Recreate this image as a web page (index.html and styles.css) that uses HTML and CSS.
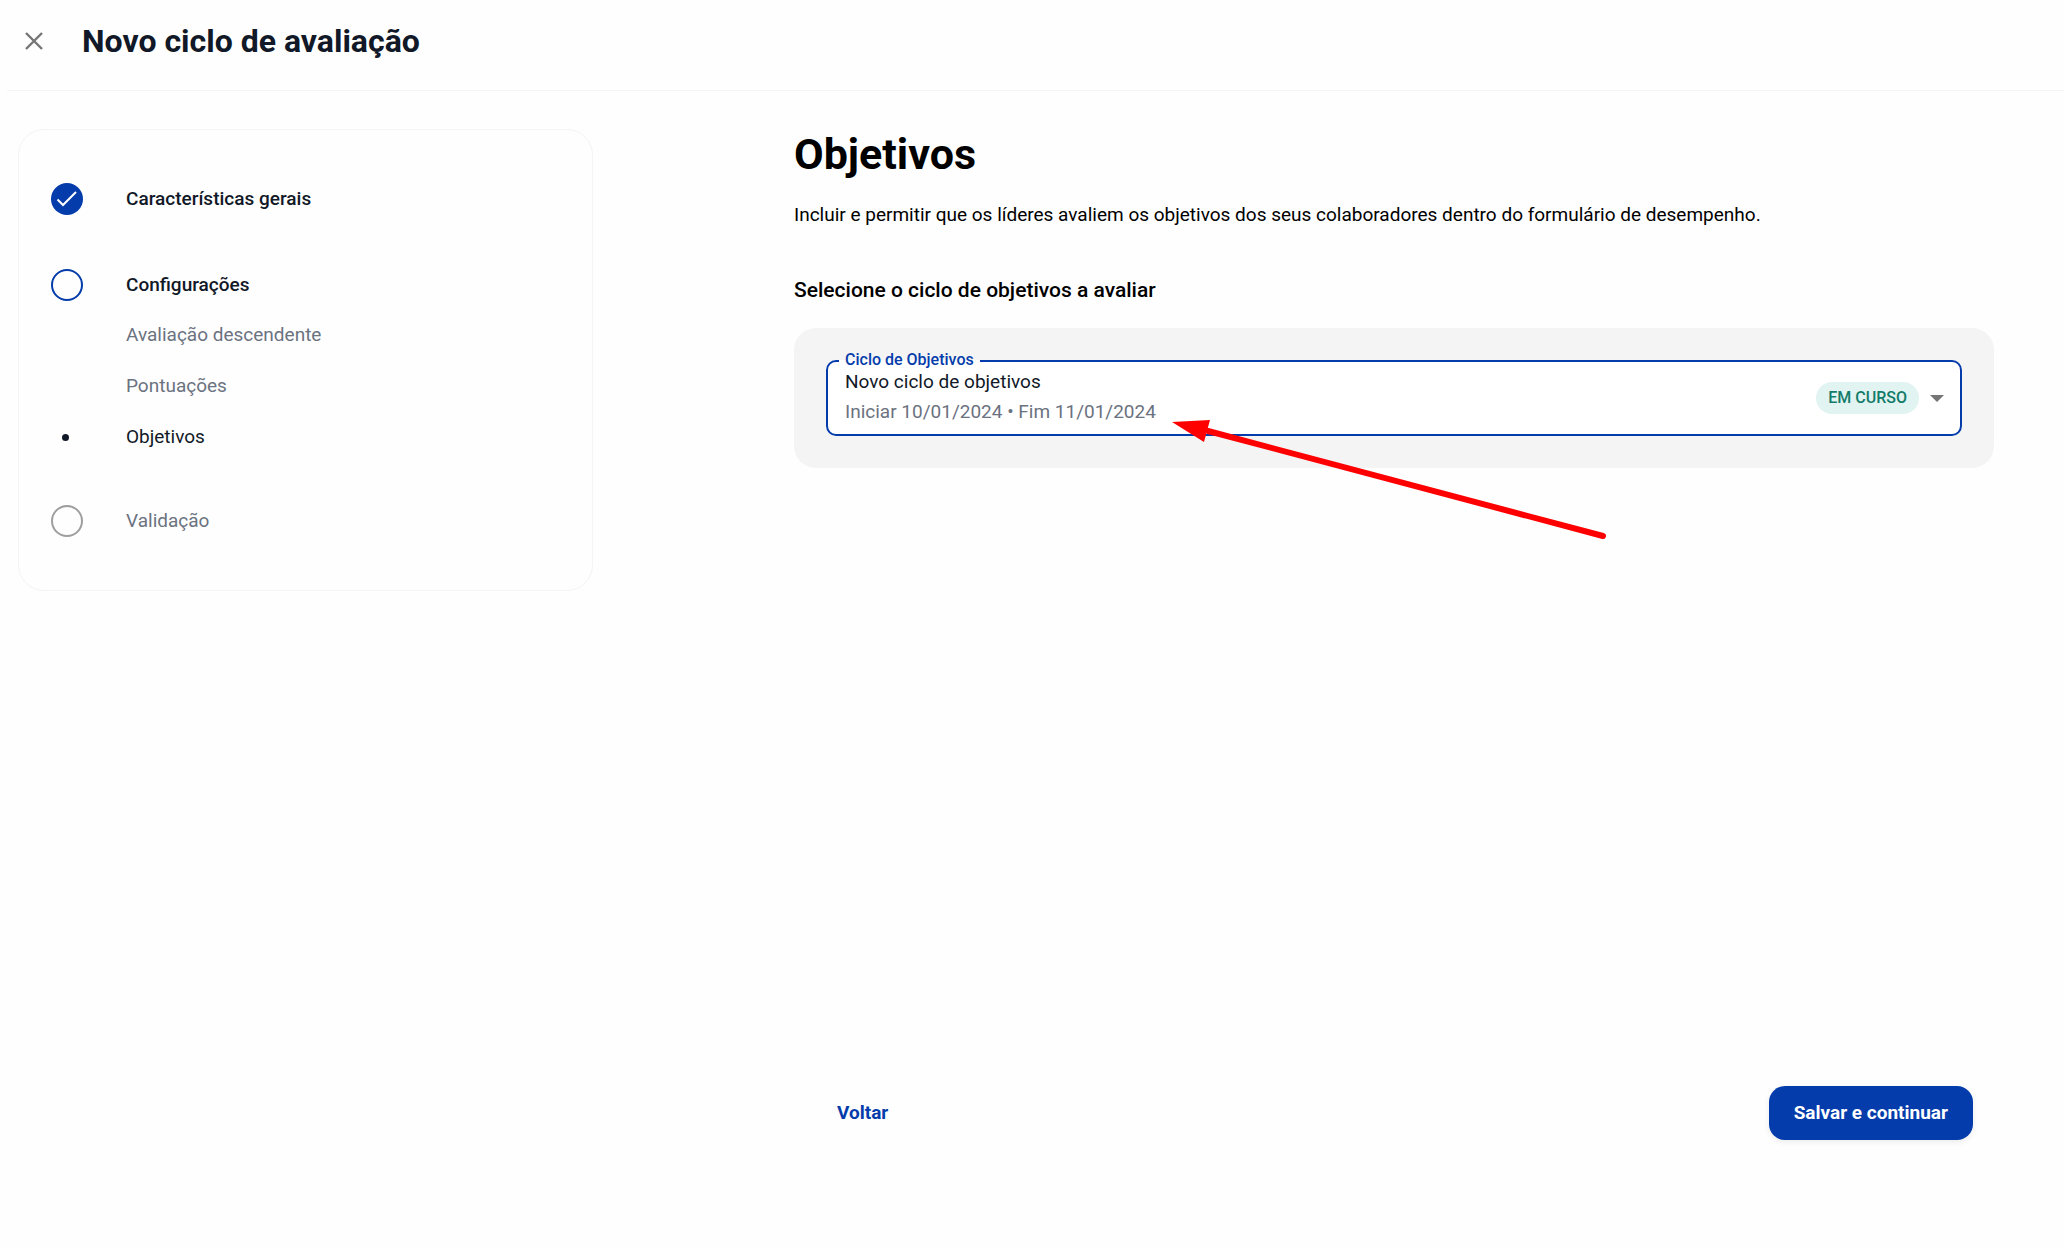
FILE: index.html
```html
<!DOCTYPE html>
<html lang="pt-BR">
<head>
    <meta charset="UTF-8">
    <meta name="viewport" content="width=device-width, initial-scale=1.0">
    <title>Novo ciclo de avaliação</title>
    <link rel="stylesheet" href="styles.css">
</head>
<body>
    <header class="topbar">
        <button type="button" class="close-btn" aria-label="Fechar">
            <svg width="18" height="18" viewBox="0 0 18 18" fill="none" stroke="#757575" stroke-width="2.4">
                <path d="M1 1L17 17M17 1L1 17"/>
            </svg>
        </button>
        <h1>Novo ciclo de avaliação</h1>
    </header>

    <div class="layout">
        <nav class="steps">
            <div class="step">
                <svg class="step-icon" viewBox="0 0 32 32">
                    <circle cx="16" cy="16" r="16" fill="#053cab"/>
                    <path d="M6.5 16.5L12 22L25 9" fill="none" stroke="#fff" stroke-width="2"/>
                </svg>
                <span class="step-title">Características gerais</span>
            </div>

            <div class="step">
                <span class="step-icon step-circle current"></span>
                <span class="step-title">Configurações</span>
            </div>
            <ul class="substeps">
                <li>Avaliação descendente</li>
                <li>Pontuações</li>
                <li class="active">Objetivos</li>
            </ul>

            <div class="step">
                <span class="step-icon step-circle"></span>
                <span class="step-title pending">Validação</span>
            </div>
        </nav>

        <main class="content">
            <h2>Objetivos</h2>
            <p class="intro">Incluir e permitir que os líderes avaliem os objetivos dos seus colaboradores dentro do formulário de desempenho.</p>
            <h3>Selecione o ciclo de objetivos a avaliar</h3>

            <div class="panel">
                <fieldset class="cycle-field">
                    <legend><label for="cycle">Ciclo de Objetivos</label></legend>
                    <div class="cycle-box">
                        <select id="cycle">
                            <option>Novo ciclo de objetivos</option>
                        </select>
                        <span class="cycle-dates">Iniciar 10/01/2024 • Fim 11/01/2024</span>
                        <span class="chip">EM CURSO</span>
                        <svg class="caret" width="14" height="7" viewBox="0 0 14 7"><path d="M0 0H14L7 7Z" fill="#757575"/></svg>
                    </div>
                </fieldset>
                <svg class="arrow" width="436" height="124" viewBox="0 0 436 124">
                    <path d="M36 11L431 116" stroke="#f00" stroke-width="6" stroke-linecap="round"/>
                    <path d="M0 2L38 0L32 22Z" fill="#f00"/>
                </svg>
            </div>

            <div class="actions">
                <button type="button" class="btn btn-text">Voltar</button>
                <button type="button" class="btn btn-primary">Salvar e continuar</button>
            </div>
        </main>
    </div>
</body>
</html>
```
FILE: styles.css
```css
* { box-sizing: border-box; }
body { margin: 0; min-height: 100vh; display: flex; flex-direction: column; background: #fefefe; color: #111827; font-family: Roboto, "Liberation Sans", sans-serif; font-size: 19px; line-height: 24px; }
h1, h2, h3, p, ul { margin: 0; padding: 0; }
button, select { font: inherit; }

.topbar { display: flex; align-items: center; gap: 31px; height: 91px; margin-left: 7px; padding: 0 10px 8px; border-bottom: 1px solid #f4f4f4; }
.topbar h1 { font-size: 32px; line-height: 40px; font-weight: 700; }
.close-btn { display: flex; padding: 8px; border: none; background: none; cursor: pointer; }

.layout { flex: 1; display: grid; grid-template-columns: 575px 1fr; gap: 201px; padding: 38px 70px 108px 18px; }

.steps { align-self: start; padding: 53px 32px; border: 1px solid #f4f4f4; border-radius: 26px; }
.step { display: flex; align-items: center; gap: 43px; height: 32px; margin-bottom: 54px; }
.step:last-child { margin-bottom: 0; }
.step-icon { width: 32px; height: 32px; flex: none; }
.step-circle { border: 2px solid #9e9e9e; border-radius: 50%; }
.step-circle.current { border-color: #053cab; }
.step-title { font-weight: 500; }
.step-title.pending { font-weight: 400; color: #6b7280; }
.substeps { list-style: none; margin: -32px 0 56px; }
.substeps li { display: flex; align-items: center; height: 24px; margin-bottom: 27px; padding-left: 75px; color: #6b7280; }
.substeps li.active { color: #111827; padding-left: 11px; gap: 57px; }
.substeps li.active::before { content: ""; width: 7px; height: 7px; border-radius: 50%; background: #111827; }

.content { display: flex; flex-direction: column; color: #000; }
.content h2 { font-size: 43px; line-height: 50px; font-weight: 700; }
.intro { margin: 24px 0 51px; }
.content h3 { font-size: 21px; line-height: 24px; font-weight: 500; margin-bottom: 26px; }

.panel { position: relative; padding: 24px 32px 32px; background: #f4f4f4; border-radius: 22px; }
.cycle-field { margin: 0; padding: 0; border: 2px solid #053cab; border-radius: 10px; background: #fff; }
.cycle-field legend { margin-left: 11px; padding: 0 6px; height: 18px; line-height: 16px; font-size: 16px; font-weight: 500; color: #053cab; }
.cycle-box { display: grid; grid-template-columns: 1fr auto auto; grid-template-rows: 38px 34px; align-items: center; margin-top: -8px; padding-right: 16px; column-gap: 11px; }
.cycle-box select { grid-area: 1 / 1 / -1 / -1; align-self: stretch; margin-right: -16px; padding: 0 17px 32px; border: none; outline: none; background: none; color: #111827; appearance: none; }
.cycle-dates { grid-area: 2 / 1; align-self: start; padding-left: 17px; color: #6b7280; pointer-events: none; }
.chip { grid-area: 1 / 2 / -1 / 3; padding: 4px 12px; border-radius: 16px; background: #e1f4f1; color: #137b69; font-size: 16px; font-weight: 500; pointer-events: none; }
.caret { grid-area: 1 / 3 / -1 / 4; pointer-events: none; }
.arrow { position: absolute; left: 378px; top: 92px; fill: none; pointer-events: none; }

.actions { display: flex; justify-content: space-between; align-items: center; margin-top: auto; padding: 0 21px; }
.btn { height: 54px; border: none; border-radius: 16px; font-weight: 700; cursor: pointer; }
.btn-text { padding: 0 22px; background: none; color: #053cab; }
.btn-primary { padding: 0 25px; background: #053cab; color: #fff; box-shadow: 0 2px 6px rgba(0, 0, 0, 0.08); }
```
